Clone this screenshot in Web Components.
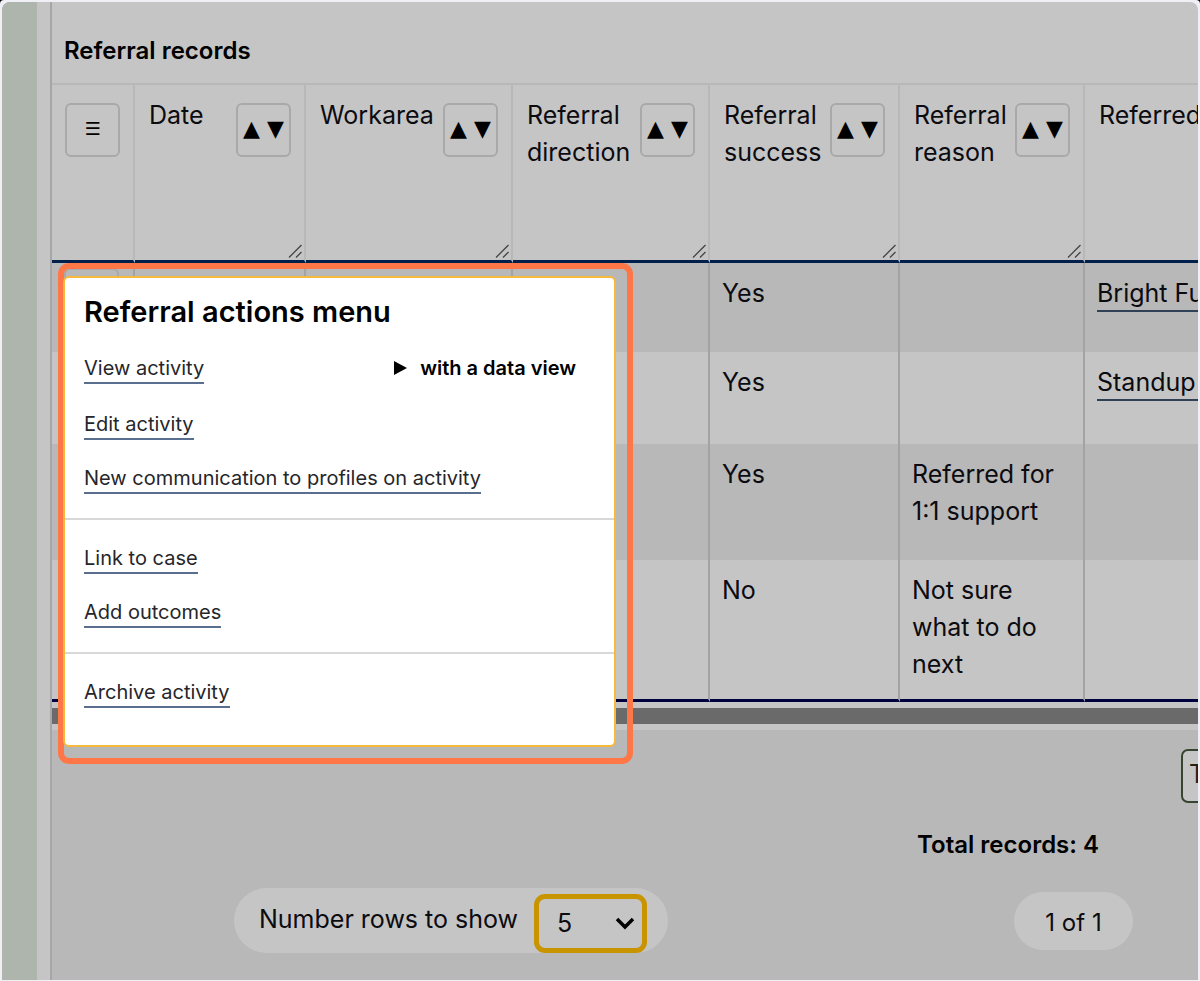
<!DOCTYPE html>
<html lang="en">
<head>
<meta charset="utf-8">
<title>Referral records</title>
<style>
  html { background: #000; }
  body { margin: 0; font-family: Inter, "Liberation Sans", sans-serif; font-size: 25px; line-height: 37px; color: #0b0b10; }
</style>
</head>
<body>
<app-shell>
  <records-panel>
    <span slot="title">Referral records</span>
    <records-table></records-table>
    <actions-menu slot="overlay" heading="Referral actions menu">
      <menu-section>
        <menu-row><menu-link>View activity</menu-link><menu-disclosure slot="aside">with a data view</menu-disclosure></menu-row>
        <menu-row><menu-link>Edit activity</menu-link></menu-row>
        <menu-row><menu-link>New communication to profiles on activity</menu-link></menu-row>
      </menu-section>
      <menu-section>
        <menu-row><menu-link>Link to case</menu-link></menu-row>
        <menu-row><menu-link>Add outcomes</menu-link></menu-row>
      </menu-section>
      <menu-section>
        <menu-row><menu-link>Archive activity</menu-link></menu-row>
      </menu-section>
    </actions-menu>
    <records-footer slot="footer"></records-footer>
  </records-panel>
</app-shell>

<script>
function define(name, html, setup) {
  const template = document.createElement('template');
  template.innerHTML = html;
  customElements.define(name, class extends HTMLElement {
    constructor() {
      super();
      this.attachShadow({ mode: 'open' }).append(template.content.cloneNode(true));
    }
    connectedCallback() { if (setup) setup(this, this.shadowRoot); }
  });
}

define('app-shell', `
  <style>
    :host { display: flex; box-sizing: border-box; min-height: 100vh; padding: 2px 2px 1px; background: #f0eff5; border-radius: 4px 4px 0 0; }
    .window { flex: 1; min-width: 0; display: flex; overflow: hidden; border-radius: 8px 8px 0 0; background: #c5c5c5; }
    .rail { flex: 0 0 35px; background: #aeb5ad; }
    main { flex: 1; min-width: 0; margin-left: 13px; display: flex; }
  </style>
  <div class="window"><div class="rail"></div><main><slot></slot></main></div>
`);

define('records-panel', `
  <style>
    :host { flex: 1; min-width: 0; position: relative; display: flex; flex-direction: column; border-left: 2px solid #a6a6a6; }
    h2 { margin: 0; padding: 30px 12px 14px; font-size: 24px; line-height: 37px; font-weight: 600; color: #000; }
    .scroll { overflow: hidden; border-top: 2px solid #b8b8b8; }
    .bar { height: 16px; margin: 6px 0; background: #6a6a6a; }
    .grow { flex: 1; display: flex; }
  </style>
  <h2><slot name="title"></slot></h2>
  <div class="scroll"><slot></slot></div>
  <div class="bar"></div>
  <div class="grow"><slot name="footer"></slot></div>
  <slot name="overlay"></slot>
`);

define('icon-button', `
  <style>
    :host { display: block; flex: none; }
    button { box-sizing: border-box; width: 55px; height: 54px; padding: 0 0 2px; border: 2px solid #a9a9a9; border-radius: 6px; background: none; color: #000;
      display: flex; align-items: center; justify-content: center; gap: 7px; font: 22px/22px "DejaVu Sans", sans-serif; }
  </style>
  <button type="button"><slot></slot></button>
`, (el, root) => root.querySelector('button').setAttribute('aria-label', el.getAttribute('label')));

define('sort-header', `
  <style>
    :host { display: flex; flex-direction: column; justify-content: space-between; box-sizing: border-box; height: 175px; padding: 12px 0 0 14px; }
    .top { display: flex; justify-content: space-between; padding-right: 13px; }
    icon-button { margin-top: 6px; }
    svg { display: block; align-self: flex-end; width: 14px; height: 14px; margin: 0 2px 2px 0; }
  </style>
  <div class="top"><span><slot></slot></span><icon-button label="Sort"><span>▲</span><span>▼</span></icon-button></div>
  <svg viewBox="0 0 14 14" fill="none" stroke="#444" stroke-width="1.3" aria-hidden="true"><path d="M1 13.500 13.500 1M8 13.500 13.500 8"/></svg>
`);

define('records-table', `
  <style>
    :host { display: block; }
    table { width: 1240px; table-layout: fixed; border-collapse: separate; border-spacing: 0; }
    th, td { padding: 0; text-align: left; vertical-align: top; font-weight: 400; border-right: 2px solid #b8b8b8; box-sizing: border-box; }
    th { border-bottom: 3px solid #001f4a; height: 178px; }
    td { padding: 12px 18px 0 12px; border-right-color: #a3a3a3; }
    tbody tr:nth-child(odd) { background: #b8b8b8; }
    tbody tr:last-child td { border-bottom: 3px solid #00003e; }
    .r1 td { height: 89px; } .r2 td { height: 92px; } .r3 td { height: 116px; } .r4 td { height: 142px; }
    td:first-child { padding: 5px 12px; }
    .pick { padding: 18px 13px 0; }
    .plain { padding: 12px 0 0 14px; }
    .lines { font-size: 18px; }
    a { display: inline-block; min-width: 100%; line-height: 33px; color: inherit; text-decoration: none; border-bottom: 2px solid #2f4057; white-space: nowrap; }
  </style>
  <table>
    <colgroup><col style="width:83px"><col style="width:171px"><col style="width:207px"><col style="width:197px"><col style="width:190px"><col style="width:185px"><col></colgroup>
    <thead><tr>
      <th scope="col"><div class="pick"><icon-button label="Table menu"><span class="lines">☰</span></icon-button></div></th>
      <th scope="col"><sort-header>Date</sort-header></th>
      <th scope="col"><sort-header>Workarea</sort-header></th>
      <th scope="col"><sort-header>Referral<br>direction</sort-header></th>
      <th scope="col"><sort-header>Referral<br>success</sort-header></th>
      <th scope="col"><sort-header>Referral<br>reason</sort-header></th>
      <th scope="col"><div class="plain">Referred</div></th>
    </tr></thead>
    <tbody>
      <tr class="r1"><td><icon-button label="Row actions"></icon-button></td><td></td><td></td><td></td><td>Yes</td><td></td><td><a href="#">Bright Fu</a></td></tr>
      <tr class="r2"><td></td><td></td><td></td><td></td><td>Yes</td><td></td><td><a href="#">Standup</a></td></tr>
      <tr class="r3"><td></td><td></td><td></td><td></td><td>Yes</td><td>Referred for 1:1 support</td><td></td></tr>
      <tr class="r4"><td></td><td></td><td></td><td></td><td>No</td><td>Not sure what to do next</td><td></td></tr>
    </tbody>
  </table>
`);

define('records-footer', `
  <style>
    :host { flex: 1; min-width: 0; overflow: hidden; background: #b8b8b8; display: flex; flex-direction: column; padding: 19px 0 27px; }
    .tool { align-self: flex-end; box-sizing: border-box; width: 120px; height: 54px; margin-right: -103px; padding: 0 0 4px 6px; text-align: left;
      border: 2px solid #35452f; border-radius: 7px; background: #c5c5c5; color: #22201a; font: inherit; }
    .total { align-self: flex-end; margin: 23px 99px 25px 0; font-size: 24px; font-weight: 600; color: #000; }
    .row { display: flex; align-items: center; justify-content: space-between; padding: 0 65px 0 182px; }
    .pill { display: flex; align-items: center; background: #c5c5c5; border-radius: 33px; box-sizing: border-box; }
    .size { height: 65px; padding: 5px 21px 0 25px; gap: 16px; }
    label { padding-bottom: 8px; }
    .page { height: 58px; width: 119px; padding-top: 3px; justify-content: center; font-size: 24px; }
    .pick { display: grid; align-items: center; }
    select, svg { grid-area: 1 / 1; }
    select { appearance: none; box-sizing: border-box; width: 113px; height: 59px; padding: 0 18px; border: 5px solid #c89400; border-radius: 11px; background: #c5c5c5; font: inherit; color: inherit; }
    svg { width: 20px; height: 14px; justify-self: end; margin-right: 12px; pointer-events: none; }
  </style>
  <button class="tool" type="button">T</button>
  <div class="total">Total records: 4</div>
  <div class="row">
    <div class="pill size">
      <label for="rows">Number rows to show</label>
      <div class="pick">
        <select id="rows"><option>5</option></select>
        <svg viewBox="0 0 20 14" fill="none" stroke="#000" stroke-width="3.500" aria-hidden="true"><path d="M2 3 10 11 18 3"/></svg>
      </div>
    </div>
    <div class="pill page">1 of 1</div>
  </div>
`);

define('actions-menu', `
  <style>
    /* Floats over the table, with a highlight ring around it */
    :host { position: absolute; top: 261px; left: 6px; box-sizing: border-box; width: 575px; border: 6px solid #ff7747; border-radius: 11px; padding: 7px 11px 11px 0; font-size: 20px; line-height: 28px; }
    .card { border: 2px solid #f6b93b; border-radius: 6px; background: #fff; margin-left: -1px; padding-bottom: 13px; }
    h3 { margin: 0; padding: 15px 19px 15px; font-size: 29px; line-height: 38px; font-weight: 600; color: #000; }
  </style>
  <div class="card" role="dialog"><h3></h3><slot></slot></div>
`, (el, root) => { root.querySelector('h3').textContent = el.getAttribute('heading'); });

define('menu-section', `
  <style>
    :host { display: flex; flex-direction: column; gap: 24px; padding: 24px 19px; border-top: 2px solid #d8d8d8; }
    :host(:first-of-type) { border-top: 0; padding-top: 8px; }
  </style>
  <slot></slot>
`);

define('menu-row', `
  <style>:host { display: flex; justify-content: space-between; align-items: flex-start; padding-right: 19px; }</style>
  <slot></slot><slot name="aside"></slot>
`);

define('menu-link', `
  <style>
    :host { display: block; }
    a { display: block; color: #26262a; text-decoration: none; border-bottom: 2px solid #5a6f90; }
  </style>
  <a href="#"><slot></slot></a>
`);

define('menu-disclosure', `
  <style>
    :host { display: block; padding-bottom: 4px; }
    button { display: flex; align-items: center; gap: 13px; padding: 0; border: 0; background: none; font: inherit; font-weight: 600; color: #000; }
    svg { width: 13px; height: 14px; }
  </style>
  <button type="button" aria-expanded="false"><svg viewBox="0 0 13 14" aria-hidden="true"><path d="M0 0 13 7 0 14Z"/></svg><slot></slot></button>
`);
</script>
</body>
</html>
